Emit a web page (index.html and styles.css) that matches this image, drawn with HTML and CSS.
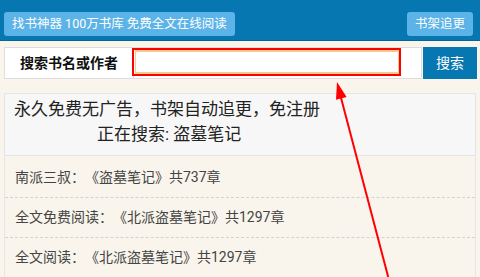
FILE: index.html
```html
<!DOCTYPE html>
<html lang="zh-CN">
<head>
    <meta charset="UTF-8">
    <meta name="viewport" content="width=device-width, initial-scale=1.0">
    <title>找书神器</title>
    <link rel="stylesheet" href="styles.css">
</head>
<body>
  <div class="top">
    <a class="top_btn">找书神器 100万书库 免费全文在线阅读</a>
    <a class="top_btn">书架追更</a>
  </div>

  <div class="search">
    <div class="search_label">搜索书名或作者</div>
    <div class="search_field">
      <div class="mark">
        <div class="search_input"></div>
      </div>
    </div>
    <a class="search_btn">搜索</a>
  </div>

  <div class="notice">
    <p>永久免费无广告，书架自动追更，免注册</p>
    <p class="now">正在搜索: 盗墓笔记</p>
  </div>

  <ul class="result">
    <li>南派三叔：《盗墓笔记》共737章</li>
    <li>全文免费阅读：《北派盗墓笔记》共1297章</li>
    <li>全文阅读：《北派盗墓笔记》共1297章</li>
  </ul>

  <!-- 标注箭头 -->
  <svg class="arrow" width="480" height="277" viewBox="0 0 480 277">
    <line x1="389" y1="280" x2="340" y2="94" stroke="#ff0000" stroke-width="2"/>
    <polygon points="337,82 346.6,97 336,99.8" fill="#ff0000"/>
  </svg>
</body>
</html>
```

FILE: styles.css
```css
*{
  margin:0;
  padding:0;
  box-sizing: border-box;
}
body{
  background: #f9f5ec;
  font-family: Roboto, "Noto Sans CJK SC", sans-serif;
  text-spacing-trim: space-all;
  position: relative;
  overflow: hidden;
  height: 277px;
}
.top{
  height: 41px;
  background: #0677b1;
  border-bottom: 1px solid #05659a;
  display: flex;
  justify-content: space-between;
  align-items: flex-start;
  padding: 12px 7px 0 4px;
}
.top_btn{
  display: block;
  height: 24px;
  line-height: 24px;
  background: #5cb3e7;
  color: #fff;
  font-size: 12.5px;
  border-radius: 3px;
  padding: 0 8px;
}
.search{
  display: flex;
  height: 32px;
  margin: 6px 3px 0 4px;
}
.search_label{
  width: 130px;
  background: #fff;
  border: 1px solid #ddd;
  font-size: 14px;
  font-weight: bold;
  color: #111;
  line-height: 30px;
  text-align: center;
}
.search_field{
  flex: 1;
  background: #fff;
  border: 1px solid #ddd;
  border-left: none;
  padding-right: 20px;
}
.mark{
  height: 28px;
  margin-left: -2px;
  border: 2px solid #ff0000;
  padding-left: 1px;
}
.search_input{
  height: 100%;
  border: 2px solid #f6cb8c;
  border-left-width: 1px;
  border-right-width: 1px;
}
.search_btn{
  display: block;
  width: 54px;
  margin-left: 1px;
  background: #0677b1;
  color: #fff;
  font-size: 14px;
  line-height: 32px;
  text-align: center;
}
.notice{
  margin: 14px 4px 0;
  height: 63px;
  background: #f7f7f7;
  border: 1px solid #e6e6e6;
  padding: 3px 0 0 9px;
  font-size: 17px;
  line-height: 25px;
  color: #222;
}
.notice .now{
  padding-left: 83px;
}
.result{
  list-style: none;
  margin: 0 4px;
  padding-top: 2px;
  border-left: 1px solid #e6e6e6;
  border-right: 1px solid #e6e6e6;
}
.result li{
  height: 40px;
  line-height: 38px;
  border-bottom: 1px dashed #d2d2d2;
  padding-left: 10px;
  font-size: 14px;
  color: #444;
}
.arrow{
  position: absolute;
  left: 0;
  top: 0;
}
```
